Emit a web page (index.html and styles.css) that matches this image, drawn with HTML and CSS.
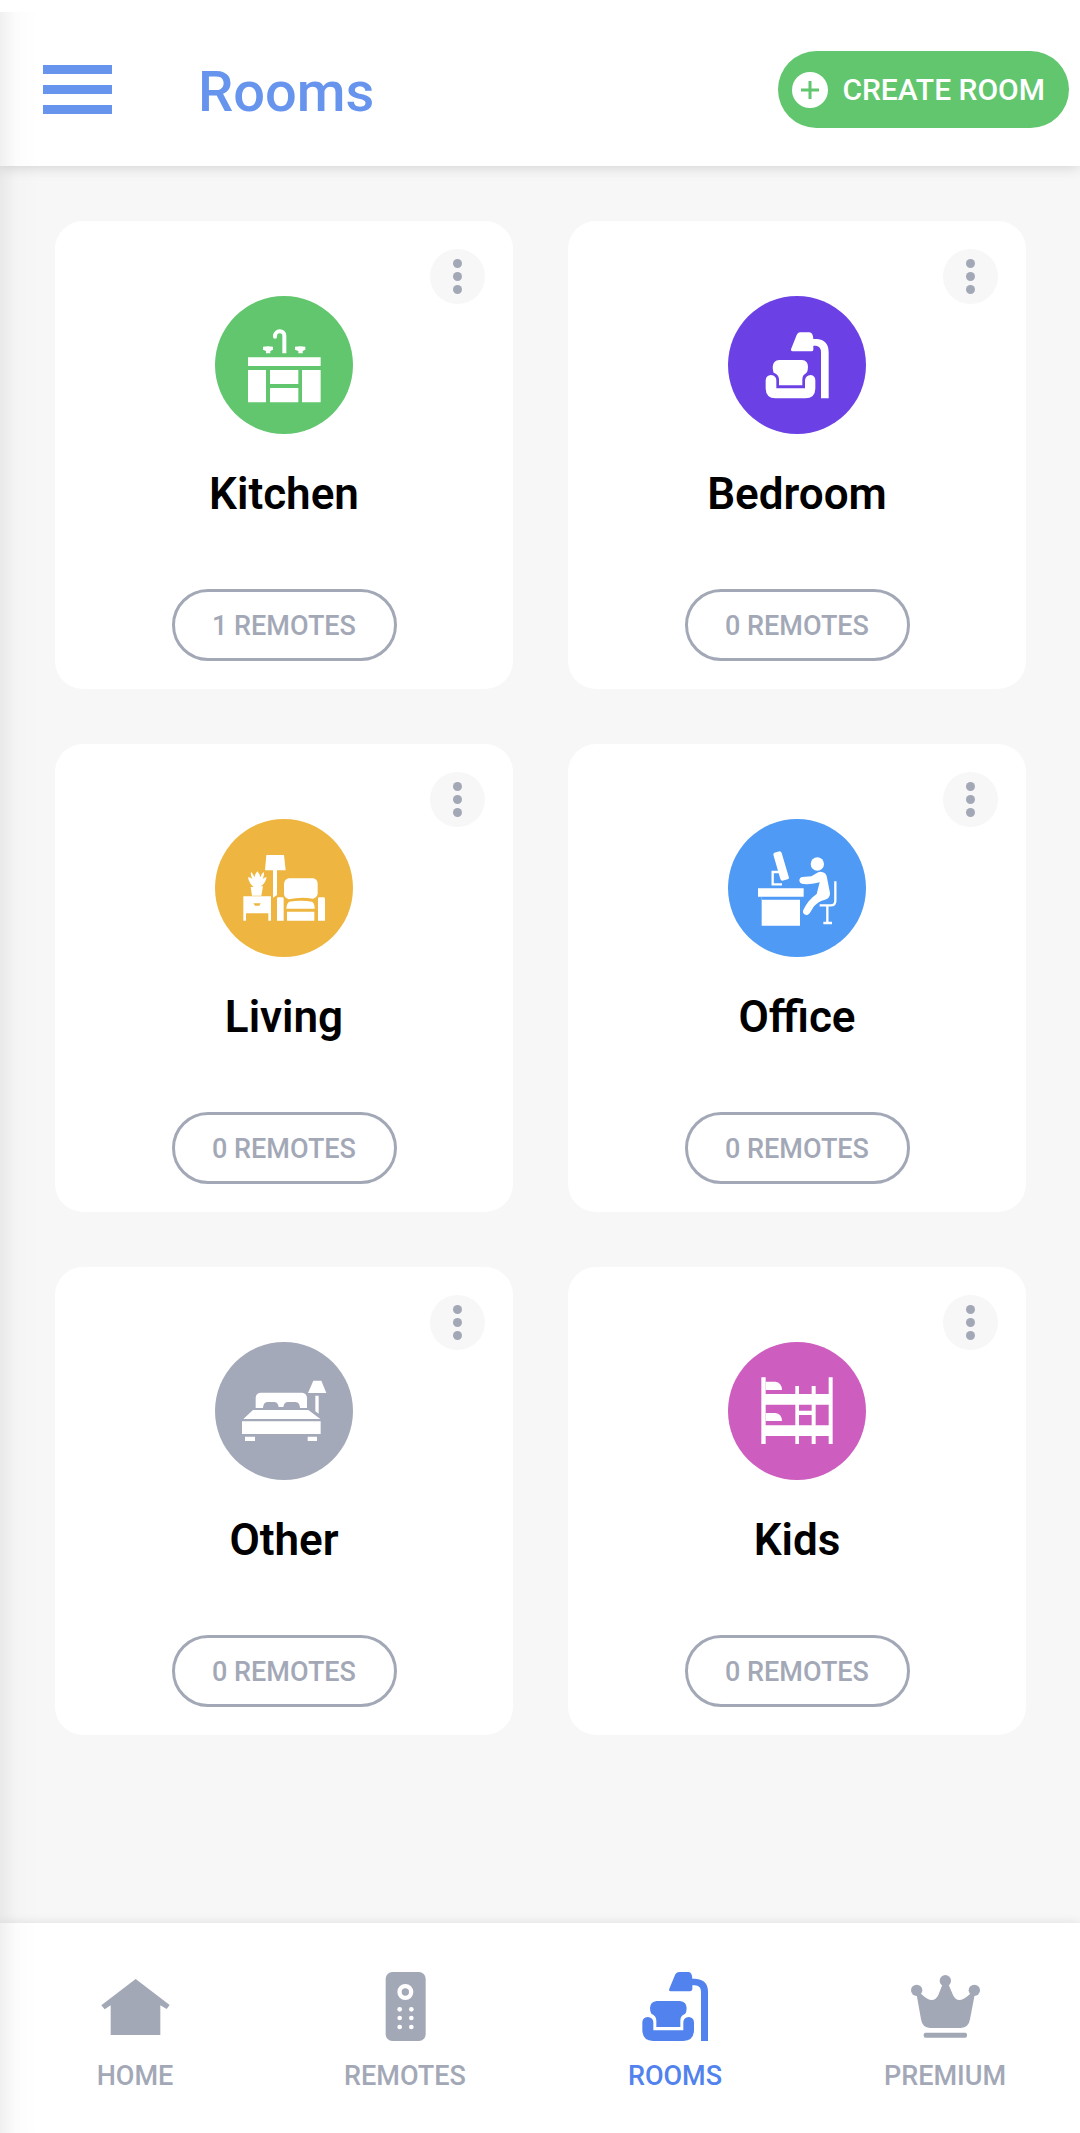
FILE: index.html
```html
<!DOCTYPE html>
<html lang="en">
<head>
<meta charset="utf-8">
<meta name="viewport" content="width=device-width, initial-scale=1">
<title>Rooms</title>
<link rel="stylesheet" href="styles.css">
</head>
<body>
<header class="topbar">
  <button class="burger" type="button" aria-label="Open menu"><span></span><span></span><span></span></button>
  <h1 class="page-title">Rooms</h1>
  <button class="create" type="button">
    <svg class="create-icon" viewBox="0 0 36 36" aria-hidden="true"><circle cx="18" cy="18" r="18" fill="#fff"/><path d="M9 18h18M18 9v18" stroke="#61c66e" stroke-width="3"/></svg>
    CREATE ROOM
  </button>
</header>

<main class="rooms">
  <article class="card">
    <button class="more" type="button" aria-label="Kitchen options"><span></span><span></span><span></span></button>
    <svg class="room-icon green" viewBox="45 47 414 414" aria-hidden="true">
      <path d="M144 231H362V257H144zM144 269H198V366H144zM210 269H295V311H210zM210 323H295V366H210zM306 269H362V366H306z"/>
      <path d="M189 199Q203 196 219 199V208L211 212V219H198V212L189 208zM285 199Q300 196 316 199V208L308 212V219H295V212L285 208z"/>
      <path class="line" d="M225 168C225 148 253 148 253 166V219" stroke-width="12"/>
      <circle cx="225" cy="169" r="6"/>
    </svg>
    <h2 class="room-name">Kitchen</h2>
    <a class="pill" href="#kitchen">1 REMOTES</a>
  </article>

  <article class="card">
    <button class="more" type="button" aria-label="Bedroom options"><span></span><span></span><span></span></button>
    <svg class="room-icon violet" viewBox="54 47 414 414" aria-hidden="true">
      <path d="M270 156H298Q309 157 310 176H322Q356 180 356 216V354H333V216Q333 198 318 196H310V208Q310 213 304 213H247Q241 212 243 207L260 164Q263 156 270 156z"/>
      <path d="M208 239H276Q294 240 294 260Q294 272 289 278Q277 284 277 296V315H207V296Q206 282 191 277Q188 270 188 260Q189 240 208 239z"/>
      <path d="M167 300Q168 285 183 284Q199 286 199 300V324H285V300Q287 285 302 284Q316 286 316 300V325Q315 354 286 354H196Q168 353 167 325z"/>
    </svg>
    <h2 class="room-name">Bedroom</h2>
    <a class="pill" href="#bedroom">0 REMOTES</a>
  </article>

  <article class="card">
    <button class="more" type="button" aria-label="Living options"><span></span><span></span><span></span></button>
    <svg class="room-icon amber" viewBox="45 56 414 414" aria-hidden="true">
      <path d="M199 164H252L257 210H231V284L219 292V210H195z"/>
      <path d="M144 231Q150 229 157 236Q151 224 153 215Q160 220 163 231Q166 219 172 213Q179 220 181 231Q184 220 191 215Q194 224 188 236Q194 230 200 231Q196 250 182 258H189L184 286H156L152 260H161Q147 250 144 231z"/>
      <path fill-rule="evenodd" d="M130 288H213V361H205V339H138V361H130zM160 309L165 316H178L182 309z"/>
      <path d="M266 234H340Q353 237 353 251V281Q350 292 339 295Q302 289 266 297Q253 292 252 281V251Q253 237 266 234z"/>
      <path d="M231 295Q231 291 235 291H247Q251 291 251 295V361H231zM354 295Q354 291 358 291H370Q375 291 375 295V361H354zM259 325Q260 308 268 304Q302 298 336 304Q344 309 344 325zM261 334H343V361H261z"/>
    </svg>
    <h2 class="room-name">Living</h2>
    <a class="pill" href="#living">0 REMOTES</a>
  </article>

  <article class="card">
    <button class="more" type="button" aria-label="Office options"><span></span><span></span><span></span></button>
    <svg class="room-icon blue" viewBox="54 56 414 414" aria-hidden="true">
      <path d="M144 264H281V289H270V376H155V289H144z"/>
      <path class="cut" d="M155 289H270V298H155z"/>
      <path d="M193 157L209 153Q213 153 215 158L237 232Q237 236 233 237L217 241Q213 241 211 236L190 163Q190 159 193 157z"/>
      <path class="line" d="M207 215H188V252H216" stroke-width="7"/>
      <circle cx="322" cy="191" r="20"/>
      <path d="M277 230L304 228L322 217Q334 211 345 219Q350 224 351 232L360 278Q361 294 345 298Q324 303 312 318L299 339Q292 348 283 342Q276 337 281 327Q295 298 320 281L329 246Q309 253 279 251Q268 249 268 240Q269 231 277 230z"/>
      <path class="line" d="M376 243V301Q376 315 362 315H329M352 315V368M340 368H366" stroke-width="7"/>
    </svg>
    <h2 class="room-name">Office</h2>
    <a class="pill" href="#office">0 REMOTES</a>
  </article>

  <article class="card">
    <button class="more" type="button" aria-label="Other options"><span></span><span></span><span></span></button>
    <svg class="room-icon grey" viewBox="45 36 414 414" aria-hidden="true">
      <path d="M181 188H306Q320 190 321 203V234H300Q299 216 287 216H262Q252 217 250 231H236Q234 217 224 216H202Q190 216 189 234H167V203Q168 190 181 188z"/>
      <path d="M159 240H325L361 267H130zM126 274H362V312H126zM135 320H165V333H135zM323 320H351V333H323zM340 152H364L379 189H324zM346 197H356V251L346 244z"/>
    </svg>
    <h2 class="room-name">Other</h2>
    <a class="pill" href="#other">0 REMOTES</a>
  </article>

  <article class="card">
    <button class="more" type="button" aria-label="Kids options"><span></span><span></span><span></span></button>
    <svg class="room-icon pink" viewBox="54 36 414 414" aria-hidden="true">
      <path d="M154 142H167V342H154zM356 142H368V342H356zM256 168H267V342H256zM305 168H317V342H305zM160 192H362V224H160zM160 286H362V318H160zM260 242H310V255H260z"/>
      <path d="M167 155H196Q215 157 216 180H167zM167 249H196Q215 251 216 273H167z"/>
    </svg>
    <h2 class="room-name">Kids</h2>
    <a class="pill" href="#kids">0 REMOTES</a>
  </article>
</main>

<nav class="tabs">
  <a class="tab" href="#home">
    <svg class="tab-icon" viewBox="183 216 207 207" aria-hidden="true"><path d="M287 237L389 315L380 327L361 316V405H212V316L194 328L184 316z"/></svg>
    HOME
  </a>
  <a class="tab" href="#remotes">
    <svg class="tab-icon" viewBox="994 216 207 207" aria-hidden="true"><rect x="1038" y="216" width="120" height="207" rx="20"/><circle cx="1097" cy="276" r="17.500" fill="none" stroke="#fff" stroke-width="13"/><g fill="#fff"><circle cx="1080" cy="328" r="7"/><circle cx="1115" cy="328" r="7"/><circle cx="1080" cy="354" r="7"/><circle cx="1115" cy="354" r="7"/><circle cx="1080" cy="381" r="7"/><circle cx="1115" cy="381" r="7"/></g></svg>
    REMOTES
  </a>
  <a class="tab active" href="#rooms" aria-current="page">
    <svg class="tab-icon" viewBox="185 216 207 207" aria-hidden="true"><path d="M300 216H328Q338 217 339 236H348Q386 239 386 275V423H365V275Q365 257 346 256H339V268Q338 274 332 274H274Q267 273 270 266L287 225Q291 216 300 216z"/><path d="M232 303H302Q321 305 322 324Q322 336 317 342Q303 347 303 362V381H231V362Q231 347 216 341Q212 335 212 324Q213 305 232 303z"/><path d="M189 367Q190 352 205 351Q221 352 222 367V391H312V367Q313 352 328 351Q343 352 344 367V391Q343 422 312 423H221Q190 422 189 391z"/></svg>
    ROOMS
  </a>
  <a class="tab" href="#premium">
    <svg class="tab-icon" viewBox="993 216 207 207" aria-hidden="true"><circle cx="1096" cy="242" r="17"/><circle cx="1010" cy="271" r="17"/><circle cx="1183" cy="271" r="17"/><path d="M1010 284L1023 281Q1043 300 1055 300Q1068 300 1075 285L1087 254H1106L1119 285Q1126 300 1138 300Q1150 300 1171 281L1184 284L1170 358Q1166 383 1142 384H1050Q1027 383 1023 358z"/><rect x="1031" y="398" width="130" height="15" rx="6"/></svg>
    PREMIUM
  </a>
</nav>
<div class="edge-shadow" aria-hidden="true"></div>
</body>
</html>
```
FILE: styles.css
```css
* {
  box-sizing: border-box;
}

body {
  margin: 0;
  min-height: 100vh;
  display: flex;
  flex-direction: column;
  position: relative;
  background: #f7f7f7;
  color: #000;
  font-family: Roboto, "Liberation Sans", sans-serif;
}

button {
  border: 0;
  padding: 0;
  font: inherit;
  cursor: pointer;
}

a {
  text-decoration: none;
}

.topbar {
  display: flex;
  align-items: center;
  padding: 51px 11px 38px 43px;
  background: #fff;
  box-shadow: 0 0 14px rgba(0, 0, 0, 0.18);
}

.burger {
  display: flex;
  flex-direction: column;
  gap: 11px;
  width: 69px;
  background: none;
}

.burger span {
  height: 9px;
  background: #6795ed;
}

.page-title {
  flex: 1;
  margin: 0 0 0 86px;
  padding-top: 5px;
  color: #6795ed;
  font-size: 56px;
  font-weight: 500;
  line-height: 72px;
}

.create {
  display: flex;
  align-items: center;
  gap: 14px;
  height: 77px;
  padding: 0 24px 0 14px;
  border-radius: 39px;
  background: #61c66e;
  color: #fff;
  font-size: 30px;
  font-weight: 500;
}

.create-icon {
  width: 36px;
  height: 36px;
}

.rooms {
  flex: 1;
  display: grid;
  grid-template-columns: 1fr 1fr;
  align-content: start;
  gap: 55px;
  padding: 55px 54px 55px 55px;
}

.card {
  display: flex;
  flex-direction: column;
  align-items: center;
  padding: 28px;
  border-radius: 28px;
  background: #fff;
}

.more {
  align-self: flex-end;
  display: flex;
  flex-direction: column;
  align-items: center;
  justify-content: center;
  gap: 4px;
  width: 55px;
  height: 55px;
  margin-bottom: -8px;
  border-radius: 50%;
  background: #f7f7f7;
}

.more span {
  width: 9px;
  height: 9px;
  border-radius: 50%;
  background: #a3a8b7;
}

.room-icon {
  width: 138px;
  height: 138px;
  border-radius: 50%;
  fill: #fff;
}

.room-icon .line {
  fill: none;
  stroke: #fff;
}

.room-icon .cut {
  fill: #4e9af5;
}

.green { background: #61c66e; }
.violet { background: #6b41e6; }
.amber { background: #eeb640; }
.blue { background: #4e9af5; }
.grey { background: #a3a9b8; }
.pink { background: #cd5dbf; }

.room-name {
  margin: 34px 0 69px;
  font-size: 44px;
  font-weight: 600;
  line-height: 52px;
}

.pill {
  display: flex;
  align-items: center;
  justify-content: center;
  width: 225px;
  height: 72px;
  padding-top: 2px;
  border: 3px solid #a3a8b7;
  border-radius: 36px;
  color: #a3a8b7;
  font-size: 27px;
  font-weight: 500;
}

.tabs {
  display: grid;
  grid-template-columns: repeat(4, 1fr);
  padding: 49px 0 41px;
  background: #fff;
  box-shadow: 0 0 10px rgba(0, 0, 0, 0.1);
}

.tab {
  display: flex;
  flex-direction: column;
  align-items: center;
  gap: 19px;
  color: #a3a8b7;
  font-size: 27px;
  font-weight: 500;
  line-height: 32px;
}

.tab.active {
  color: #5182ed;
}

.tab-icon {
  width: 69px;
  height: 69px;
  fill: currentColor;
}

.edge-shadow {
  position: absolute;
  top: 12px;
  bottom: 0;
  left: 0;
  width: 40px;
  background: linear-gradient(to right, rgba(0, 0, 0, 0.06), rgba(0, 0, 0, 0.01) 40%, rgba(0, 0, 0, 0));
  pointer-events: none;
}
```
